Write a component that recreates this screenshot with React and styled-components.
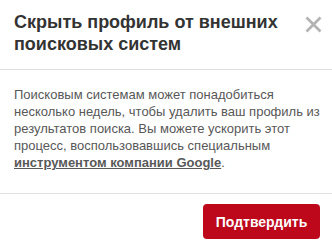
import styled, { createGlobalStyle } from "styled-components";

const GlobalStyle = createGlobalStyle`
  body {
    margin: 0;
    background: #fff;
    font-family: "Liberation Sans", Arial, sans-serif;
  }
`;

const Modal = styled.div`
  width: 332px;
  background: #fff;
`;

const Header = styled.div`
  display: flex;
  justify-content: space-between;
  align-items: flex-start;
  box-sizing: border-box;
  height: 70px;
  padding: 11px 10px 0 14px;
  border-bottom: 1px solid #e0e0e0;
`;

const Title = styled.h1`
  margin: 0;
  font-size: 18px;
  line-height: 22px;
  font-weight: bold;
  color: #333;
  width: 270px;
`;

const CloseButton = styled.button`
  border: none;
  background: transparent;
  padding: 0;
  margin-top: 5px;
  cursor: pointer;
  display: flex;
`;

const Body = styled.div`
  padding: 16px 8px 22px 14px;
  border-bottom: 1px solid #e0e0e0;
`;

const Text = styled.p`
  margin: 0;
  font-size: 13px;
  line-height: 17px;
  color: #585858;
`;

const Link = styled.a`
  font-weight: bold;
  color: #585858;
  text-decoration: underline;
`;

const Footer = styled.div`
  display: flex;
  justify-content: flex-end;
  padding: 10px 12px;
`;

const ConfirmButton = styled.button`
  background: #bd081c;
  color: #fff;
  border: none;
  border-radius: 4px;
  height: 35px;
  width: 117px;
  font-family: inherit;
  font-size: 14px;
  font-weight: bold;
  cursor: pointer;
`;

export default function App() {
  return (
    <>
      <GlobalStyle />
      <Modal>
        <Header>
          <Title>Скрыть профиль от внешних поисковых систем</Title>
          <CloseButton aria-label="Закрыть">
            <svg width="17" height="17" viewBox="0 0 17 17">
              <path
                d="M1.5 1.5L15.5 15.5M15.5 1.5L1.5 15.5"
                stroke="#b3b3b3"
                strokeWidth="2.7"
              />
            </svg>
          </CloseButton>
        </Header>
        <Body>
          <Text>
            Поисковым системам может понадобиться несколько недель, чтобы
            удалить ваш профиль из результатов поиска. Вы можете ускорить этот
            процесс, воспользовавшись специальным{" "}
            <Link href="#">инструментом компании Google</Link>.
          </Text>
        </Body>
        <Footer>
          <ConfirmButton>Подтвердить</ConfirmButton>
        </Footer>
      </Modal>
    </>
  );
}
